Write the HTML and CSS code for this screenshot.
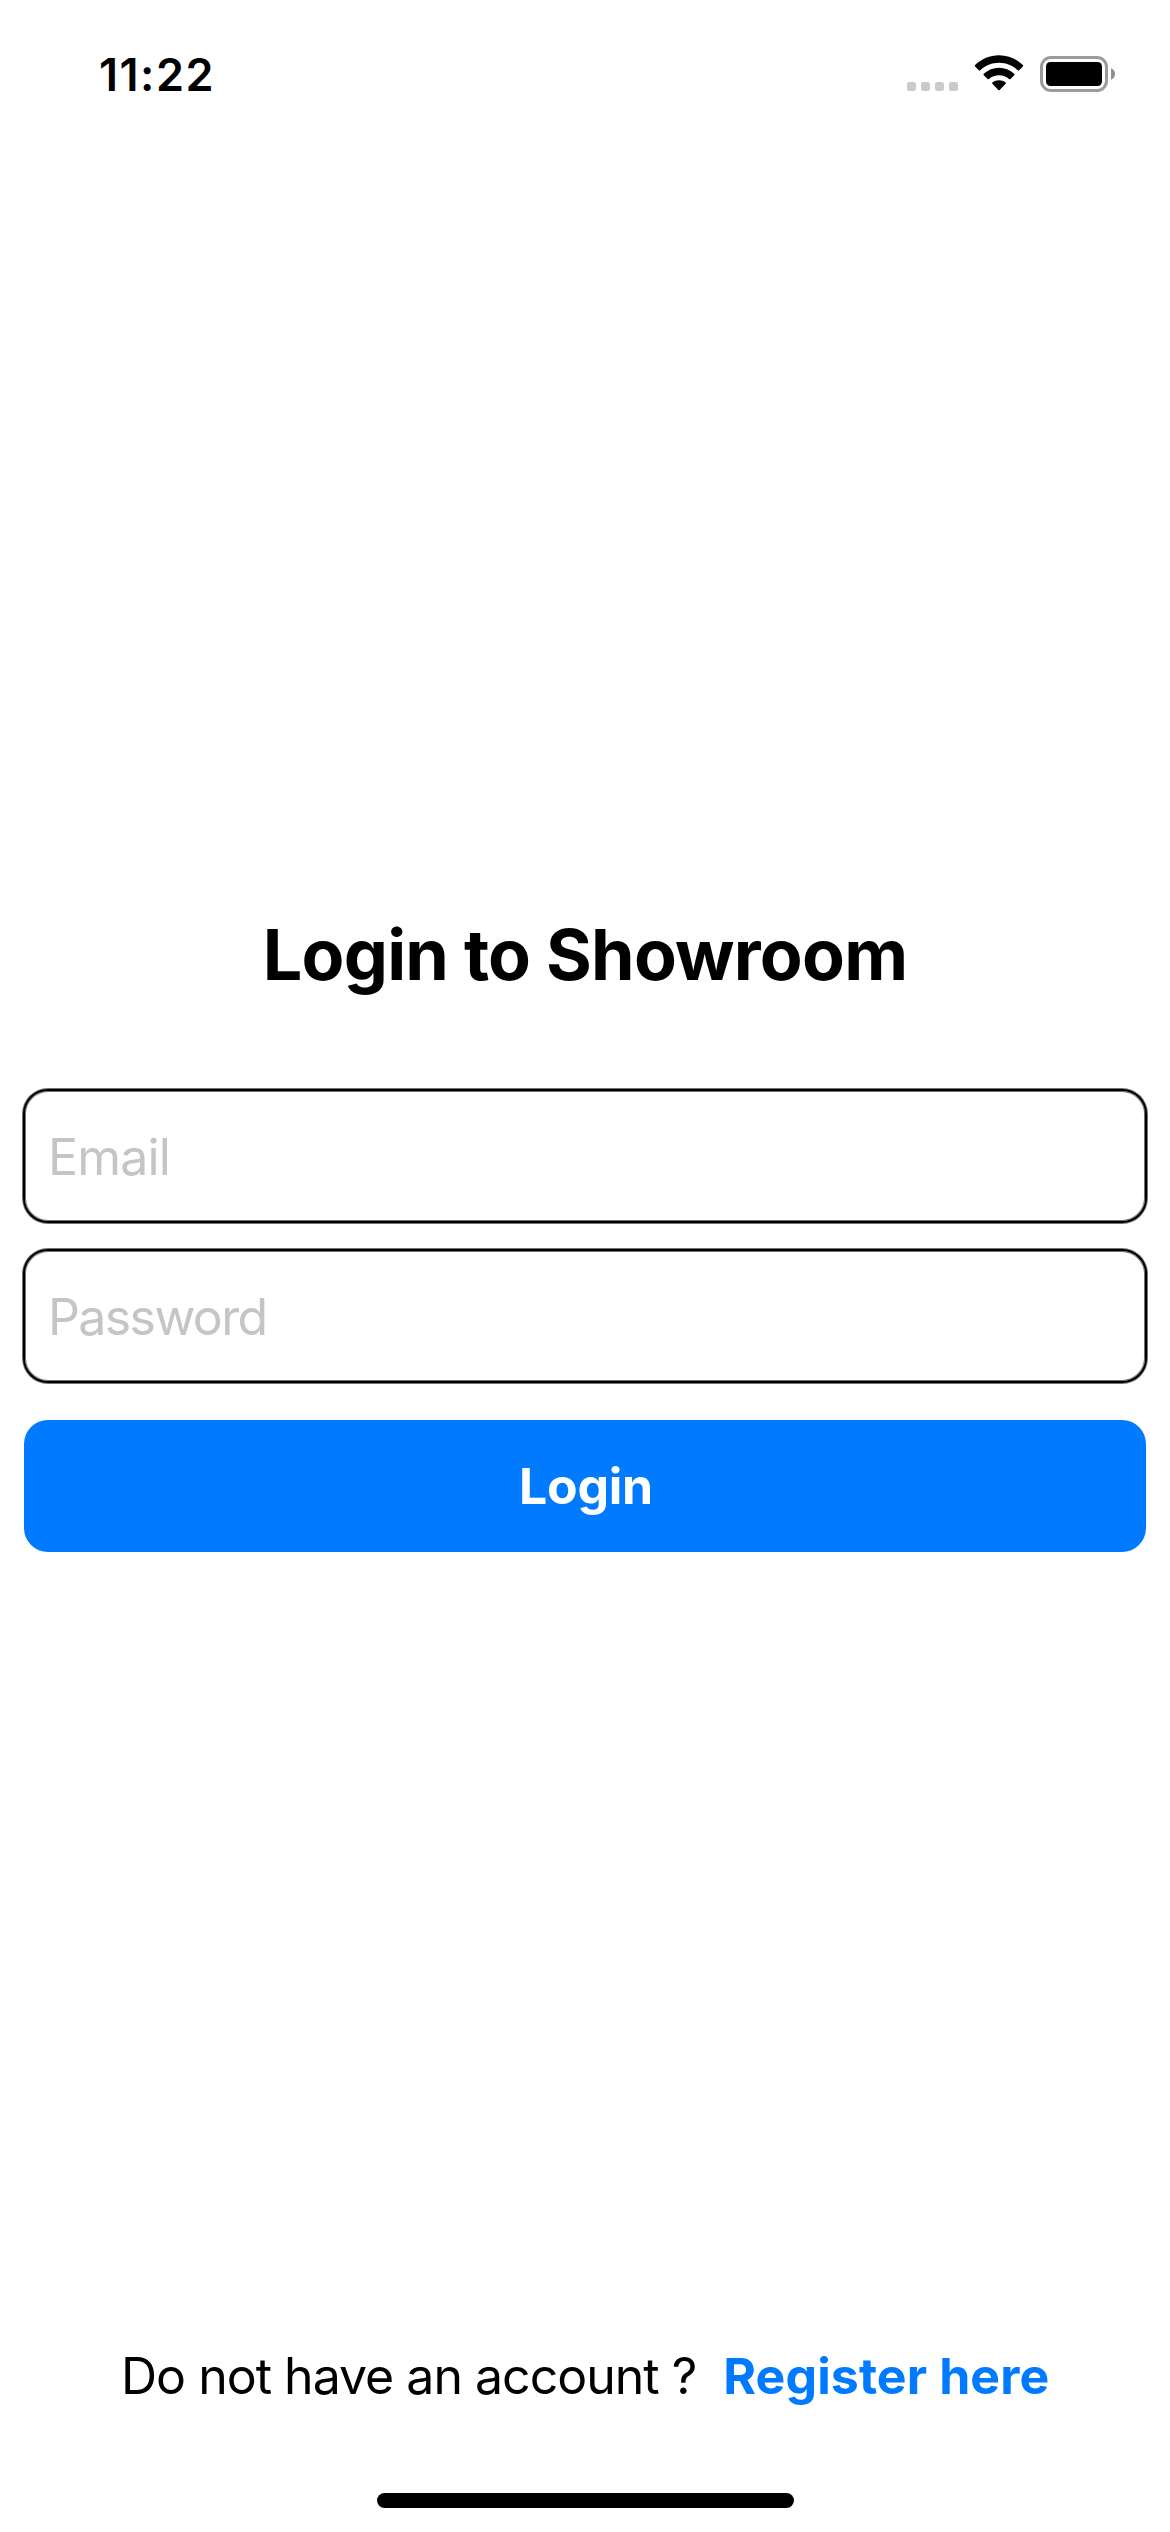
FILE: index.html
```html
<!DOCTYPE html>
<html lang="en">
<head>
<meta charset="utf-8">
<title>Login to Showroom</title>
<link rel="stylesheet" href="styles.css">
</head>
<body>
<div class="screen">
  <header class="status-bar">
    <time class="clock">11:22</time>
    <div class="indicators">
      <svg class="signal" width="51" height="9" viewBox="0 0 51 9" fill="#cacaca">
        <rect width="9" height="9" rx="2.5"/><rect x="14" width="9" height="9" rx="2.5"/><rect x="28" width="9" height="9" rx="2.5"/><rect x="42" width="9" height="9" rx="2.5"/>
      </svg>
      <svg class="wifi" width="50" height="37" viewBox="0 0 50 37">
        <path d="M25 0.2C34 0.2 42.5 3.8 48.9 10Q49.6 10.8 48.9 11.5L45.2 15.2Q44.5 15.9 43.7 15.2C38.7 10.5 32 7.8 25 7.8S11.3 10.5 6.3 15.2Q5.5 15.9 4.8 15.2L1.1 11.5Q0.4 10.8 1.1 10C7.5 3.8 16 0.2 25 0.2Z"/>
        <path d="M25 12.8C30.7 12.8 36 14.9 40.2 18.7Q41 19.5 40.2 20.2L36.5 23.9Q35.8 24.6 35 23.9C32.3 21.5 28.8 20.2 25 20.2S17.7 21.5 15 23.9Q14.2 24.6 13.5 23.9L9.8 20.2Q9 19.5 9.8 18.7C14 14.9 19.3 12.8 25 12.8Z"/>
        <path d="M25 25.2C27.5 25.2 29.8 26 31.6 27.4Q32.3 28.1 31.6 28.8L25.7 34.9Q25 35.600 24.3 34.9L18.4 28.8Q17.7 28.1 18.4 27.4C20.2 26 22.5 25.2 25 25.2Z"/>
      </svg>
      <svg class="battery" width="75" height="36" viewBox="0 0 75 36">
        <rect x="1.5" y="1.5" width="65" height="33" rx="9.5" fill="none" stroke="#9b9b9b" stroke-width="3"/>
        <rect x="6" y="6" width="56" height="24" rx="4.5"/>
        <path d="M71 12.3Q75 14 75 18T71 23.7Z" fill="#8e8e8e"/>
      </svg>
    </div>
  </header>
  <main class="login">
    <h1 class="title">Login to Showroom</h1>
    <form class="form">
      <input class="field field-email" type="email" placeholder="Email" aria-label="Email">
      <input class="field field-password" type="password" placeholder="Password" aria-label="Password">
      <button class="submit" type="button">Login</button>
    </form>
  </main>
  <footer class="register">
    <span class="prompt">Do not have an account ?</span>
    <a class="link" href="#">Register here</a>
  </footer>
  <div class="home-indicator"></div>
</div>
</body>
</html>
```
FILE: styles.css
```css
* { box-sizing: border-box; }
body { margin: 0; background: #fff; color: #000; font-family: Inter, "Liberation Sans", sans-serif; }
.screen { display: flex; flex-direction: column; width: 1170px; height: 2532px; overflow: hidden; }
.status-bar { display: flex; justify-content: space-between; height: 141px; padding: 45px 55px 0 99px; }
.clock { font-size: 45px; font-weight: 600; line-height: 59px; letter-spacing: 1.5px; }
.indicators { display: flex; padding-top: 10px; }
.signal { margin: 27px 16px 0 0; }
.wifi { margin-right: 16px; }
.battery { margin-top: 1px; }
.login { display: flex; flex-direction: column; padding: 765px 23px 0; }
.title { margin: 0; height: 183px; text-align: center; font-size: 70px; font-weight: 700; line-height: 98px; letter-spacing: -0.78px; }
.form { display: flex; flex-direction: column; gap: 26px; }
.field { width: 100%; height: 134px; margin: 0; padding: 2px 23px 0; outline: 0; border: 2px solid #000; border-radius: 25px; background: #fff; box-shadow: 0 0 0 1px rgba(0,0,0,.55), inset 0 0 0 1px rgba(0,0,0,.55); font: 400 50px/60px Inter, "Liberation Sans", sans-serif; }
.field-email { letter-spacing: -0.85px; }
.field-password { letter-spacing: -1.6px; }
.field::placeholder { color: #c5c5c7; opacity: 1; }
.submit { height: 132px; margin: 11px 1px 0; padding: 0 0 0 2px; border: 0; border-radius: 24px; background: #007aff; color: #fff; font: 700 50px/60px Inter, "Liberation Sans", sans-serif; letter-spacing: -0.25px; }
.register { display: flex; gap: 27px; margin-top: auto; padding: 0 121px; height: 147px; font-size: 50px; line-height: 60px; }
.prompt { letter-spacing: -1px; white-space: nowrap; }
.link { color: #007aff; font-weight: 700; letter-spacing: 0.1px; text-decoration: none; white-space: nowrap; }
.home-indicator { align-self: center; flex: none; width: 417px; height: 15px; margin: 0 0 24px 1px; border-radius: 8px; background: #000; }
```
